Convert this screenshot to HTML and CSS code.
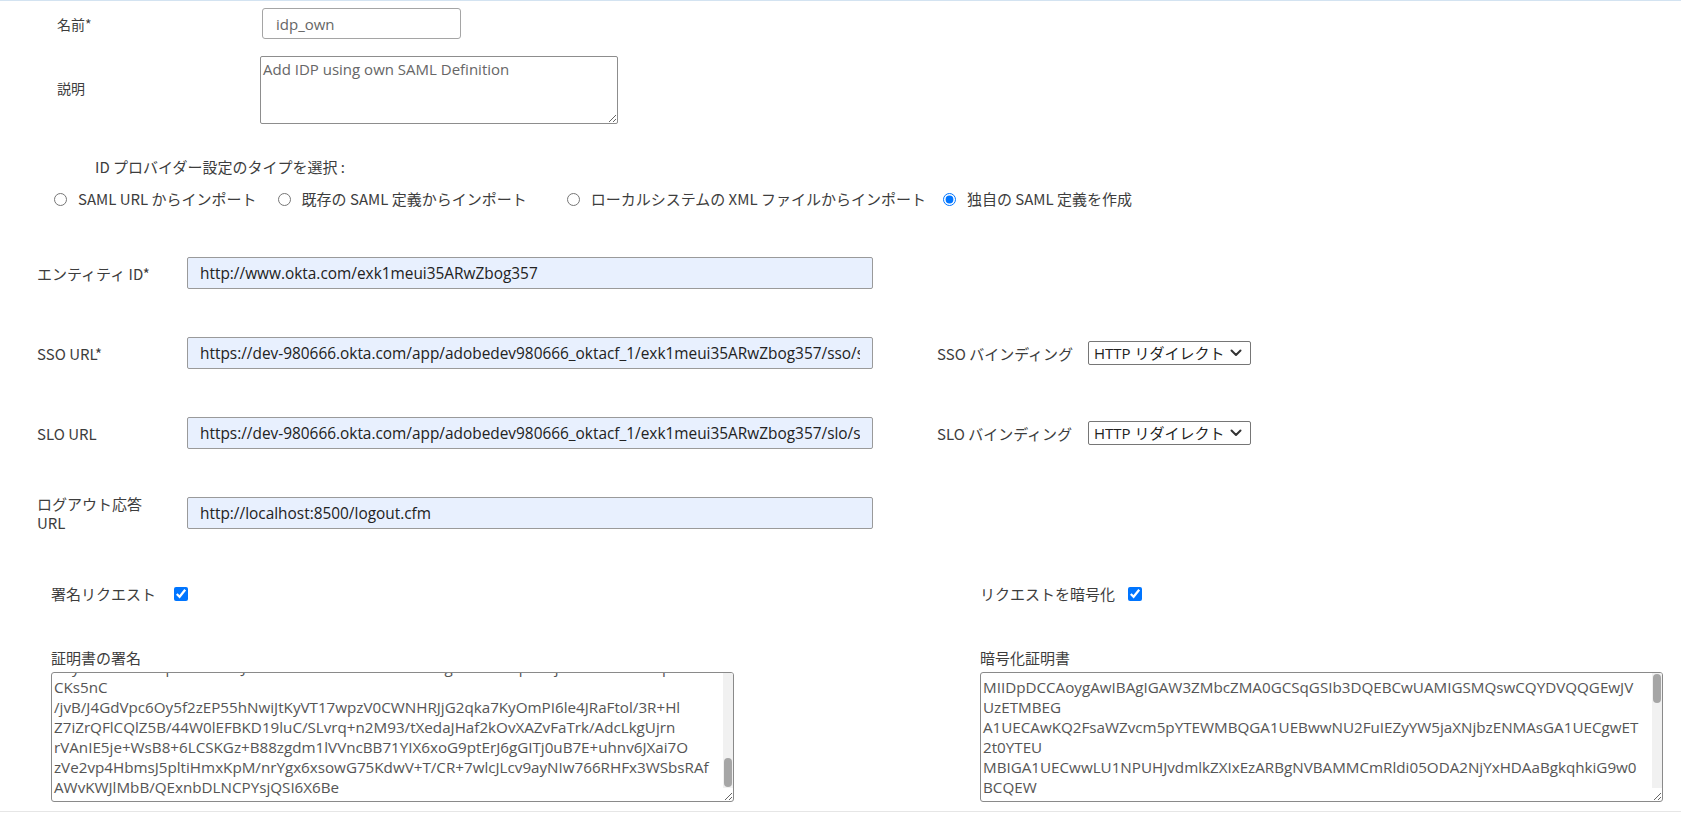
FILE: index.html
```html
<!DOCTYPE html>
<html lang="ja">
<head>
<meta charset="utf-8">
<title>IDP</title>
<link rel="stylesheet" href="styles.css">
</head>
<body>
<form class="page">
  <div class="basic">
    <label class="basic-label" for="name">名前*</label>
    <input class="name-input" id="name" type="text" value="idp_own" spellcheck="false">
    <label class="basic-label desc-label" for="desc">説明</label>
    <textarea class="desc" id="desc" spellcheck="false">Add IDP using own SAML Definition</textarea>
  </div>

  <div class="type-title">ID プロバイダー設定のタイプを選択 :</div>
  <div class="type-options">
    <label class="opt"><input type="radio" name="t">SAML URL からインポート</label>
    <label class="opt opt-2"><input type="radio" name="t">既存の SAML 定義からインポート</label>
    <label class="opt opt-3"><input type="radio" name="t">ローカルシステムの XML ファイルからインポート</label>
    <label class="opt opt-4"><input type="radio" name="t" checked>独自の SAML 定義を作成</label>
  </div>

  <div class="fields">
    <div class="field">
      <span class="field-label">エンティティ ID*</span>
      <input class="url-input" type="text" value="http://www.okta.com/exk1meui35ARwZbog357" spellcheck="false">
    </div>
    <div class="field">
      <span class="field-label">SSO URL*</span>
      <input class="url-input" type="text" value="https://dev-980666.okta.com/app/adobedev980666_oktacf_1/exk1meui35ARwZbog357/sso/saml" spellcheck="false">
      <div class="binding">
        <span class="binding-label">SSO バインディング</span>
        <span class="select-wrap">
          <select class="binding-select"><option>HTTP リダイレクト</option><option>HTTP POST</option></select>
          <svg class="chev" viewBox="0 0 12 8" width="12" height="8"><path d="M1.5 1.5 L6 6 L10.5 1.5" fill="none" stroke="#333" stroke-width="2" stroke-linecap="round" stroke-linejoin="round"/></svg>
        </span>
      </div>
    </div>
    <div class="field">
      <span class="field-label">SLO URL</span>
      <input class="url-input" type="text" value="https://dev-980666.okta.com/app/adobedev980666_oktacf_1/exk1meui35ARwZbog357/slo/saml" spellcheck="false">
      <div class="binding">
        <span class="binding-label">SLO バインディング</span>
        <span class="select-wrap">
          <select class="binding-select"><option>HTTP リダイレクト</option><option>HTTP POST</option></select>
          <svg class="chev" viewBox="0 0 12 8" width="12" height="8"><path d="M1.5 1.5 L6 6 L10.5 1.5" fill="none" stroke="#333" stroke-width="2" stroke-linecap="round" stroke-linejoin="round"/></svg>
        </span>
      </div>
    </div>
    <div class="field">
      <span class="field-label">ログアウト応答 URL</span>
      <input class="url-input" type="text" value="http://localhost:8500/logout.cfm" spellcheck="false">
    </div>
  </div>

  <div class="options">
    <label class="check-row check-sign">署名リクエスト<input type="checkbox" checked></label>
    <label class="check-row check-enc">リクエストを暗号化<input type="checkbox" checked></label>
    <div class="cert">
      <span class="cert-label">証明書の署名</span>
      <div class="cert-box">
        <textarea class="cert-text scroll-end" wrap="off" spellcheck="false">MIIDpDCCAoygAwIBAgIGAW3ZMbcZMA0GCSqGSIb3DQEBCwUAMIGSMQswCQYDVQQGEwJV
UzETMBEG
A1UECAwKQ2FsaWZvcm5pYTEWMBQGA1UEBwwNU2FuIEZyYW5jaXNjbzENMAsGA1UECgwET
2t0YTEU
MBIGA1UECwwLU1NPUHJvdmlkZXIxEzARBgNVBAMMCmRldi05ODA2NjYxHDAaBgkqhkiG9w0
BCQEW
DWluZm9Ab2t0YS5jb20wHhcNMTkxMDExMDgzNzM4WhcNMjkxMDExMDgzODM4WjCBkjEL
MAkGA1UEBhMCVVMxEzARBgNVBAgMCkNhbGlmb3JuaWExFjAUBgNVBAcMDVNhbiBGcmFuY2lz
Y28xDTALBgNVBAoMBE9rdGExFDASBgNVBAsMC1NTT1Byb3ZpZGVyMRMwEQYDVQQDDApkZXYt
OTgwNjY2MRwwGgYJKoZIhvcNAQkBFg1pbmZvQG9rdGEuY29tMIIBIjANBgkqhkiG9w0BAQEF
AAOCAQ8AMIIBCgKCAQEAqAf5bWfQ3K2ZQm1xTnX0hN9rE4cL7pYs8Vd2uJkGz6wBtH3oRa
5YxLqP0nMiE7sUcV2dJf9KgT4hWb8ZrN1oAeCy3QvXlD6pFmI0tGjS7kHuB2wYnRzE5aOx
Lc9MvT1qWdP4sKfJ8gN3bYhZr6eUoX2iA7tCmQ0lVjH5nSyR9wDkF1aGpE3xOzB6uTq8Wv
Ij4KmYc2NsL7hRbf0eQ9tZgA5XoDpU1wVnM3iCk6lS8yHrE2TjGa4Qu7BzPxOd0FvWm9Ne
5sK1cJqL3yRtH8gZbD2fA6wXnE0pMvU4iG7oYk9BlSaTe1hQrC3NzW5jPdV8xFu2mOyKg
IDAQABMA0GCSqGSIb3DQEBCwUAA4IBAQBz7vRk2pQ5nXcL8tJ3mYhG1wF0aEd6sKuPoB9r
Hq4NiZ2xT7lVgCe5MjWb8yUo3DfS1aKn6RtEp0LcYz9QvXh4IgJm2BwNs7OuFdA5kTre3P
K8yGvZ1nHs6LqWdC0bMxJ4oUe9tRaV2fPi7lYk3ScNwE5gXhA1zT8qOuDjB6mKvI0nF4sLp
CKs5nC
/jvB/J4GdVpc6Oy5f2zEP55hNwiJtKyVT17wpzV0CWNHRJjG2qka7KyOmPI6le4JRaFtol/3R+Hl
Z7iZrQFlCQlZ5B/44W0lEFBKD19luC/SLvrq+n2M93/tXedaJHaf2kOvXAZvFaTrk/AdcLkgUjrn
rVAnIE5je+WsB8+6LCSKGz+B88zgdm1lVVncBB71YIX6xoG9ptErJ6gGITj0uB7E+uhnv6JXai7O
zVe2vp4HbmsJ5pltiHmxKpM/nrYgx6xsowG75KdwV+T/CR+7wlcJLcv9ayNIw766RHFx3WSbsRAf
AWvKWJlMbB/QExnbDLNCPYsjQSI6X6Be</textarea>
        <span class="scroll-track"><span class="scroll-thumb thumb-bottom"></span></span>
      </div>
    </div>
    <div class="cert">
      <span class="cert-label">暗号化証明書</span>
      <div class="cert-box">
        <textarea class="cert-text" wrap="off" spellcheck="false">MIIDpDCCAoygAwIBAgIGAW3ZMbcZMA0GCSqGSIb3DQEBCwUAMIGSMQswCQYDVQQGEwJV
UzETMBEG
A1UECAwKQ2FsaWZvcm5pYTEWMBQGA1UEBwwNU2FuIEZyYW5jaXNjbzENMAsGA1UECgwET
2t0YTEU
MBIGA1UECwwLU1NPUHJvdmlkZXIxEzARBgNVBAMMCmRldi05ODA2NjYxHDAaBgkqhkiG9w0
BCQEW
DWluZm9Ab2t0YS5jb20wHhcNMTkxMDExMDgzNzM4WhcNMjkxMDExMDgzODM4WjCBkjEL
MAkGA1UEBhMCVVMxEzARBgNVBAgMCkNhbGlmb3JuaWExFjAUBgNVBAcMDVNhbiBGcmFuY2lz
Y28xDTALBgNVBAoMBE9rdGExFDASBgNVBAsMC1NTT1Byb3ZpZGVyMRMwEQYDVQQDDApkZXYt
OTgwNjY2MRwwGgYJKoZIhvcNAQkBFg1pbmZvQG9rdGEuY29tMIIBIjANBgkqhkiG9w0BAQEF
AAOCAQ8AMIIBCgKCAQEAqAf5bWfQ3K2ZQm1xTnX0hN9rE4cL7pYs8Vd2uJkGz6wBtH3oRa
5YxLqP0nMiE7sUcV2dJf9KgT4hWb8ZrN1oAeCy3QvXlD6pFmI0tGjS7kHuB2wYnRzE5aOx
Lc9MvT1qWdP4sKfJ8gN3bYhZr6eUoX2iA7tCmQ0lVjH5nSyR9wDkF1aGpE3xOzB6uTq8Wv
Ij4KmYc2NsL7hRbf0eQ9tZgA5XoDpU1wVnM3iCk6lS8yHrE2TjGa4Qu7BzPxOd0FvWm9Ne
5sK1cJqL3yRtH8gZbD2fA6wXnE0pMvU4iG7oYk9BlSaTe1hQrC3NzW5jPdV8xFu2mOyKg
IDAQABMA0GCSqGSIb3DQEBCwUAA4IBAQBz7vRk2pQ5nXcL8tJ3mYhG1wF0aEd6sKuPoB9r
Hq4NiZ2xT7lVgCe5MjWb8yUo3DfS1aKn6RtEp0LcYz9QvXh4IgJm2BwNs7OuFdA5kTre3P
K8yGvZ1nHs6LqWdC0bMxJ4oUe9tRaV2fPi7lYk3ScNwE5gXhA1zT8qOuDjB6mKvI0nF4sLp
Z7iZrQFlCQlZ5B/44W0lEFBKD19luC/SLvrq+n2M93/tXedaJHaf2kOvXAZvFaTrk/AdcLkg
rVAnIE5je+WsB8+6LCSKGz+B88zgdm1lVVncBB71YIX6xoG9ptErJ6gGITj0uB7E+uhnv6J
zVe2vp4HbmsJ5pltiHmxKpM/nrYgx6xsowG75KdwV+T/CR+7wlcJLcv9ayNIw766RHFx3WS
AWvKWJlMbB/QExnbDLNCPYsjQSI6X6Be</textarea>
        <span class="scroll-track"><span class="scroll-thumb thumb-top"></span></span>
      </div>
    </div>
  </div>
  <div class="footer-line"></div>
</form>
<script src="script.js"></script>
</body>
</html>
```

FILE: styles.css
```css
* { box-sizing: border-box; }
html, body { margin: 0; background: #fff; }
body {
  font-family: "Noto Sans CJK JP", "Open Sans", sans-serif;
  font-size: 14px;
  color: #3d3d3d;
  border-top: 1px solid #d3e3f1;
}
.page { margin: 0; }

.basic {
  display: grid;
  grid-template-columns: 205px 360px;
  row-gap: 17px;
  align-items: center;
  padding: 7px 0 0 57px;
}
.basic-label { line-height: 20px; }
.desc-label { margin-bottom: 4px; }
.name-input {
  width: 199px;
  height: 31px;
  border: 1px solid #a5a5a5;
  border-radius: 3px;
  padding: 0 13px;
  font: 15px "Open Sans", sans-serif;
  color: #666;
  background: #fff;
}
.desc {
  width: 358px;
  height: 68px;
  margin-left: -2px;
  border: 1px solid #8d8d8d;
  border-radius: 2px;
  padding: 2px 2px;
  font: 15px/20px "Open Sans", sans-serif;
  color: #666;
  resize: both;
}

.type-title {
  margin: 33px 0 0 95px;
  line-height: 20px;
  font-size: 15px;
}
.type-options {
  display: flex;
  align-items: center;
  margin: 12px 0 0 54px;
  line-height: 20px;
  font-size: 15px;
}
.opt { display: flex; align-items: center; }
.opt input {
  width: 13px;
  height: 13px;
  margin: 0 11px 0 0;
  accent-color: #0075ff;
}
.opt-2 { margin-left: 21px; }
.opt-3 { margin-left: 40px; }
.opt-4 { margin-left: 17px; }

.fields {
  display: flex;
  flex-direction: column;
  gap: 48px;
  margin-top: 48px;
  padding-left: 37px;
}
.field {
  display: flex;
  align-items: center;
  height: 32px;
}
.field-label {
  width: 118px;
  margin-right: 32px;
  line-height: 19px;
  font-size: 15px;
}
.url-input {
  width: 686px;
  height: 32px;
  border: 1px solid #9a9a9a;
  border-radius: 2px;
  background: #e8f0fe;
  padding: 0 12px;
  font: 15.4px "Open Sans", sans-serif;
  color: #222;
}
.binding {
  display: flex;
  align-items: center;
  margin-left: 64px;
}
.binding-label { width: 151px; font-size: 15px; }
.select-wrap {
  position: relative;
  display: block;
  width: 163px;
  height: 24px;
}
.binding-select {
  appearance: none;
  -webkit-appearance: none;
  width: 100%;
  height: 100%;
  border: 1px solid #767676;
  border-radius: 2px;
  background: #fff;
  padding: 0 24px 0 5px;
  font: 15px "Open Sans", "Noto Sans CJK JP", sans-serif;
  color: #222;
}
.chev {
  position: absolute;
  right: 9px;
  top: 8px;
  pointer-events: none;
}

.options {
  display: grid;
  grid-template-columns: 929px 683px;
  row-gap: 44px;
  margin-top: 55px;
  padding-left: 51px;
}
.check-row {
  display: flex;
  align-items: center;
  line-height: 20px;
  font-size: 15px;
}
.check-row input {
  width: 14px;
  height: 14px;
  margin: 0 0 0 18px;
  accent-color: #0075ff;
}
.check-enc input { margin-left: 13px; }
.cert {
  display: flex;
  flex-direction: column;
  gap: 4px;
}
.cert-label { line-height: 20px; font-size: 15px; }
.cert-box {
  position: relative;
  width: 683px;
  height: 130px;
}
.cert-text {
  display: block;
  width: 683px;
  height: 130px;
  border: 1px solid #8a8a8a;
  border-radius: 3px;
  padding: 4px 2px;
  font: 15.2px/20px "Open Sans", sans-serif;
  color: #555;
  white-space: pre;
  overflow: hidden;
  resize: both;
}
.scroll-track {
  position: absolute;
  top: 1px;
  right: 1px;
  bottom: 14px;
  width: 10px;
  background: #f1f1f1;
  border-radius: 0 2px 0 0;
}
.scroll-thumb {
  position: absolute;
  left: 1px;
  width: 8px;
  height: 29px;
  background: #a6a6a6;
  border-radius: 4px;
}
.thumb-top { top: 1px; }
.thumb-bottom { bottom: 1px; }
.footer-line {
  margin-top: 9px;
  border-top: 1px solid #e6e6e6;
}
```

FILE: script.js
```js
document.querySelectorAll('.scroll-end').forEach(function (t) {
  t.scrollTop = t.scrollHeight;
});
```
